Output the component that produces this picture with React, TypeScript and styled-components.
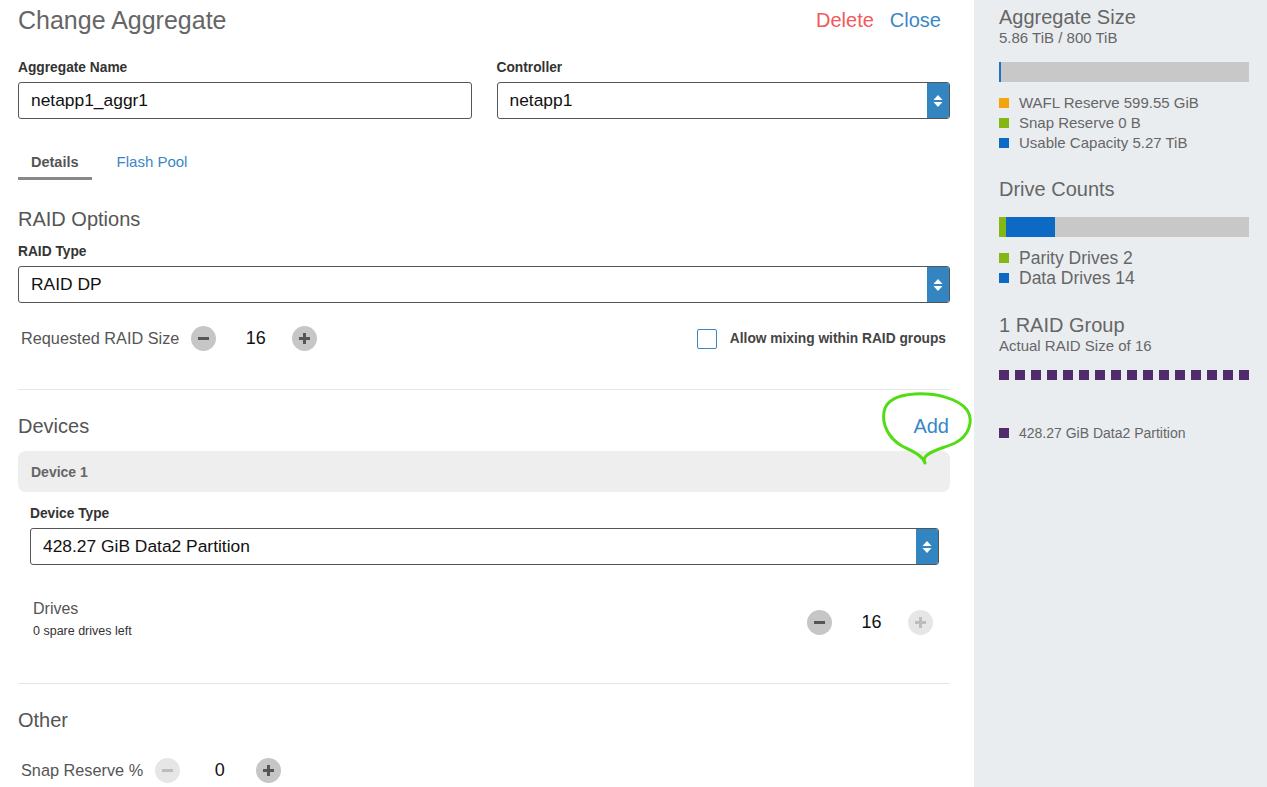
import React from 'react';
import styled, { createGlobalStyle } from 'styled-components';

const GlobalStyle = createGlobalStyle`
  html, body {
    margin: 0;
    padding: 0;
    background: #ffffff;
    font-family: "Liberation Sans", Arial, sans-serif;
  }
  * {
    box-sizing: border-box;
  }
`;

const Page = styled.div`
  display: flex;
  width: 1267px;
  height: 787px;
  overflow: hidden;
`;

const Main = styled.div`
  width: 974px;
  padding: 0 24px 0 18px;
  flex-shrink: 0;
`;

const Sidebar = styled.aside`
  flex: 1;
  background: #eaedf0;
  padding: 5px 18px 0 25px;
  color: #666;
`;

const Header = styled.div`
  display: flex;
  align-items: center;
  height: 40px;
`;

const Title = styled.h1`
  margin: 0;
  font-size: 25px;
  font-weight: normal;
  color: #666;
  flex: 1;
`;

const HeaderLink = styled.a<{ danger?: boolean }>`
  font-size: 20px;
  color: ${({ danger }) => (danger ? '#f2595b' : '#3a87c8')};
  margin-left: 16px;
  margin-right: ${({ danger }) => (danger ? 0 : 9)}px;
  cursor: pointer;
`;

const FieldRow = styled.div`
  display: grid;
  grid-template-columns: 1fr 1fr;
  gap: 25px;
  margin-top: 20px;
`;

const Label = styled.div<{ top?: number }>`
  font-size: 13.75px;
  font-weight: bold;
  color: #333;
  line-height: 16px;
  margin-top: ${({ top }) => top ?? 0}px;
  margin-bottom: 6px;
`;

const Box = styled.div`
  position: relative;
  display: flex;
  align-items: center;
  height: 37px;
  border: 1px solid #555;
  border-radius: 3px;
  background: #fff;
  padding-left: 12px;
  font-size: 17.4px;
  color: #111;
  overflow: hidden;
`;

const BoxText = styled.span`
  flex: 1;
`;

const ArrowBlock = styled.div`
  width: 22px;
  align-self: stretch;
  background: #3385c2;
  display: flex;
  align-items: center;
  justify-content: center;
`;

const Tabs = styled.div`
  display: flex;
  gap: 12px;
  margin-top: 26px;
`;

const Tab = styled.div<{ active?: boolean }>`
  font-size: ${({ active }) => (active ? 14.5 : 15)}px;
  line-height: 16px;
  padding: 9px 13px 7px;
  font-weight: ${({ active }) => (active ? 'bold' : 'normal')};
  color: ${({ active }) => (active ? '#555' : '#3a87c8')};
  border-bottom: 3px solid ${({ active }) => (active ? '#888' : 'transparent')};
`;

const SectionTitle = styled.h2<{ top: number }>`
  margin: ${({ top }) => top}px 0 0;
  font-size: 20px;
  line-height: 24px;
  font-weight: normal;
  color: #555;
`;

const OptionRow = styled.div<{ top: number }>`
  display: flex;
  align-items: center;
  justify-content: space-between;
  margin-top: ${({ top }) => top}px;
  height: 25px;
  padding: 0 4px 0 3px;
`;

const StepperGroup = styled.div<{ top?: number }>`
  display: flex;
  align-items: center;
  margin-top: ${({ top }) => top ?? 0}px;
`;

const StepLabel = styled.span`
  font-size: 16.3px;
  color: #555;
  margin-right: 12px;
`;

const RoundButton = styled.button<{ disabled?: boolean }>`
  width: 25px;
  height: 25px;
  border-radius: 50%;
  border: none;
  padding: 0;
  display: flex;
  align-items: center;
  justify-content: center;
  background: ${({ disabled }) => (disabled ? '#e6e6e6' : '#c6c6c6')};
  color: ${({ disabled }) => (disabled ? '#bdbdbd' : '#555')};
`;

const StepValue = styled.span`
  width: 52px;
  text-align: center;
  font-size: 18px;
  color: #111;
  margin: 0 12px;
  padding-left: 3px;
`;

const CheckLabel = styled.label`
  display: flex;
  align-items: center;
  font-size: 13.75px;
  font-weight: bold;
  color: #444;
`;

const CheckBox = styled.span`
  width: 20px;
  height: 20px;
  border: 1px solid #3a87c8;
  border-radius: 2px;
  margin-right: 13px;
  background: #fff;
`;

const Divider = styled.hr<{ top: number }>`
  border: none;
  border-top: 1px solid #e6e6e6;
  margin: ${({ top }) => top}px 0 0;
`;

const DevicesHeader = styled.div`
  position: relative;
  display: flex;
  align-items: center;
  justify-content: space-between;
  margin-top: 24px;
  height: 24px;
`;

const AddLink = styled.a`
  font-size: 20px;
  color: #3a87c8;
  margin-right: 1px;
`;

const Scribble = styled.svg`
  position: absolute;
  left: 860px;
  top: -24px;
  pointer-events: none;
`;

const DeviceHeader = styled.div`
  margin-top: 13px;
  height: 41px;
  background: #eeeeee;
  border-radius: 8px;
  display: flex;
  align-items: center;
  padding-left: 13px;
  font-size: 14px;
  font-weight: bold;
  color: #666;
`;

const DeviceBody = styled.div`
  padding: 0 11px 0 12px;
`;

const DrivesRow = styled.div`
  display: flex;
  align-items: flex-start;
  justify-content: space-between;
  margin-top: 34px;
  height: 45px;
  padding: 0 6px 0 3px;
`;

const DrivesTitle = styled.div`
  font-size: 16px;
  line-height: 19px;
  color: #555;
`;

const DrivesSub = styled.div`
  font-size: 12.5px;
  line-height: 14px;
  color: #333;
  margin-top: 6px;
`;

const SideTitle = styled.div<{ top: number }>`
  font-size: 20px;
  line-height: 24px;
  margin-top: ${({ top }) => top}px;
`;

const SideSub = styled.div`
  font-size: 15px;
  line-height: 16px;
  margin-top: 1px;
`;

const Bar = styled.div`
  display: flex;
  height: 20px;
  background: #c8c8c8;
  margin-top: 16px;
`;

const BarFill = styled.div<{ color: string }>`
  background: ${({ color }) => color};
  height: 100%;
`;

const Legend = styled.ul<{ top: number; size: number }>`
  list-style: none;
  margin: ${({ top }) => top}px 0 0;
  padding: 0;
  font-size: ${({ size }) => size}px;
  line-height: 20px;
`;

const LegendItem = styled.li`
  display: flex;
  align-items: center;
`;

const Swatch = styled.span<{ color: string }>`
  width: 10px;
  height: 10px;
  background: ${({ color }) => color};
  margin-right: 10px;
  flex-shrink: 0;
`;

const Dots = styled.div`
  display: flex;
  justify-content: space-between;
  margin-top: 16px;
`;

const Dot = styled.span`
  width: 10px;
  height: 10px;
  background: #522b6d;
`;

const SelectArrows = () => (
  <svg width="10" height="14" viewBox="0 0 10 14">
    <path d="M5 1 L9.5 6 H0.5 Z" fill="#fff" />
    <path d="M5 13 L9.5 8 H0.5 Z" fill="#fff" />
  </svg>
);

const Select: React.FC<{ value: string }> = ({ value }) => (
  <Box>
    <BoxText>{value}</BoxText>
    <ArrowBlock>
      <SelectArrows />
    </ArrowBlock>
  </Box>
);

const MinusIcon = () => (
  <svg width="11" height="11" viewBox="0 0 11 11">
    <rect x="0" y="4" width="11" height="3" fill="currentColor" />
  </svg>
);

const PlusIcon = () => (
  <svg width="11" height="11" viewBox="0 0 11 11">
    <rect x="0" y="4" width="11" height="3" fill="currentColor" />
    <rect x="4" y="0" width="3" height="11" fill="currentColor" />
  </svg>
);

interface StepperProps {
  value: number;
  minusDisabled?: boolean;
  plusDisabled?: boolean;
  top?: number;
}

const Stepper: React.FC<StepperProps> = ({ value, minusDisabled, plusDisabled, top }) => (
  <StepperGroup top={top}>
    <RoundButton disabled={minusDisabled}>
      <MinusIcon />
    </RoundButton>
    <StepValue>{value}</StepValue>
    <RoundButton disabled={plusDisabled}>
      <PlusIcon />
    </RoundButton>
  </StepperGroup>
);

const App: React.FC = () => {
  return (
    <>
      <GlobalStyle />
      <Page>
        <Main>
          <Header>
            <Title>Change Aggregate</Title>
            <HeaderLink danger>Delete</HeaderLink>
            <HeaderLink>Close</HeaderLink>
          </Header>

          <FieldRow>
            <div>
              <Label>Aggregate Name</Label>
              <Box>
                <BoxText>netapp1_aggr1</BoxText>
              </Box>
            </div>
            <div>
              <Label>Controller</Label>
              <Select value="netapp1" />
            </div>
          </FieldRow>

          <Tabs>
            <Tab active>Details</Tab>
            <Tab>Flash Pool</Tab>
          </Tabs>

          <SectionTitle top={27}>RAID Options</SectionTitle>
          <Label top={13}>RAID Type</Label>
          <Select value="RAID DP" />

          <OptionRow top={23}>
            <StepperGroup>
              <StepLabel>Requested RAID Size</StepLabel>
              <Stepper value={16} />
            </StepperGroup>
            <CheckLabel>
              <CheckBox />
              Allow mixing within RAID groups
            </CheckLabel>
          </OptionRow>

          <Divider top={38} />

          <DevicesHeader>
            <SectionTitle top={0}>Devices</SectionTitle>
            <AddLink>Add</AddLink>
            <Scribble width="97" height="80" viewBox="878 390 97 80">
              <path
                d="M925 463 C922 455 914 452 902 446 C888 438 882 424 884 412 C886 400 898 395 915 394 C935 393 958 398 967 410 C974 421 969 436 955 443 C944 448 932 450 926 456 C924 458 924 461 925 463"
                fill="none"
                stroke="#52dc14"
                strokeWidth="3"
                strokeLinecap="round"
                strokeLinejoin="round"
              />
            </Scribble>
          </DevicesHeader>

          <DeviceHeader>Device 1</DeviceHeader>
          <DeviceBody>
            <Label top={14}>Device Type</Label>
            <Select value="428.27 GiB Data2 Partition" />
            <DrivesRow>
              <div>
                <DrivesTitle>Drives</DrivesTitle>
                <DrivesSub>0 spare drives left</DrivesSub>
              </div>
              <Stepper value={16} plusDisabled top={11} />
            </DrivesRow>
          </DeviceBody>

          <Divider top={39} />

          <SectionTitle top={24}>Other</SectionTitle>
          <OptionRow top={26}>
            <StepperGroup>
              <StepLabel>Snap Reserve %</StepLabel>
              <Stepper value={0} minusDisabled />
            </StepperGroup>
          </OptionRow>
        </Main>

        <Sidebar>
          <SideTitle top={0}>Aggregate Size</SideTitle>
          <SideSub>5.86 TiB / 800 TiB</SideSub>
          <Bar>
            <BarFill color="#1a73c8" style={{ width: 2 }} />
          </Bar>
          <Legend top={11} size={15}>
            <LegendItem>
              <Swatch color="#f2a40c" />
              WAFL Reserve 599.55 GiB
            </LegendItem>
            <LegendItem>
              <Swatch color="#84b714" />
              Snap Reserve 0 B
            </LegendItem>
            <LegendItem>
              <Swatch color="#0d6ac4" />
              Usable Capacity 5.27 TiB
            </LegendItem>
          </Legend>

          <SideTitle top={24}>Drive Counts</SideTitle>
          <Bar>
            <BarFill color="#84b714" style={{ width: 7 }} />
            <BarFill color="#0d6ac4" style={{ width: 49 }} />
          </Bar>
          <Legend top={11} size={17.5}>
            <LegendItem>
              <Swatch color="#84b714" />
              Parity Drives 2
            </LegendItem>
            <LegendItem>
              <Swatch color="#0d6ac4" />
              Data Drives 14
            </LegendItem>
          </Legend>

          <SideTitle top={25}>1 RAID Group</SideTitle>
          <SideSub>Actual RAID Size of 16</SideSub>
          <Dots>
            {Array.from({ length: 16 }).map((_, i) => (
              <Dot key={i} />
            ))}
          </Dots>
          <Legend top={43} size={14}>
            <LegendItem>
              <Swatch color="#522b6d" />
              428.27 GiB Data2 Partition
            </LegendItem>
          </Legend>
        </Sidebar>
      </Page>
    </>
  );
};

export default App;
